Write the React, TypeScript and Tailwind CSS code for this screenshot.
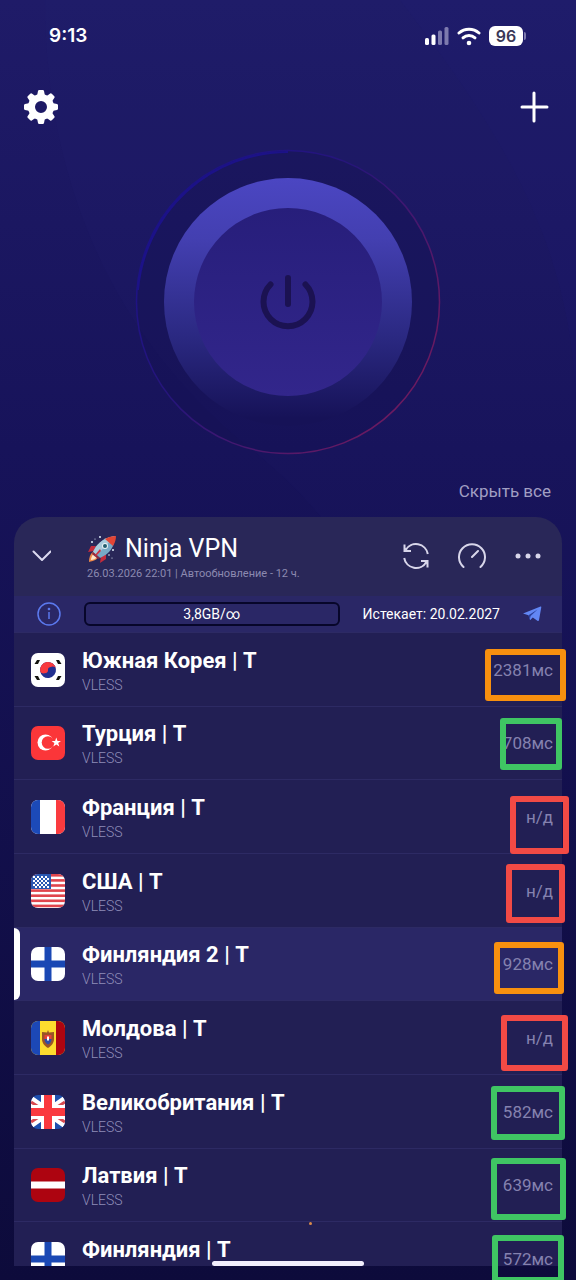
import React, { useId } from "react";

type Server = { name: string; ping: string; flag: React.ReactNode; active?: boolean };

function Flag({ children }: { children: React.ReactNode }) {
  const id = useId();
  return (
    <svg viewBox="0 0 34 34" className="size-[34px] shrink-0" aria-hidden="true">
      <defs>
        <clipPath id={id}>
          <rect width="34" height="34" rx="7" />
        </clipPath>
      </defs>
      <g clipPath={`url(#${id})`}>{children}</g>
    </svg>
  );
}

const korea = (
  <Flag>
    <rect width="34" height="34" fill="#fff" />
    <g transform="rotate(-8 17 17)">
      <circle cx="17" cy="17" r="8" fill="#23308f" />
      <path d="M9 17a8 8 0 0 1 16 0a4 2.800 0 0 0-8 0a4 2.800 0 0 1-8 0z" fill="#f83a3e" />
    </g>
    <path d="M6 7h3l-2 4H3.500zM25 7h3l2.500 4H27zM3.500 23H7l2 4H6zM27 23h3.500L28 27h-3z" fill="#14140f" />
  </Flag>
);

const turkey = (
  <Flag>
    <rect width="34" height="34" fill="#fb3639" />
    <circle cx="14.500" cy="16.500" r="8" fill="#fff" />
    <circle cx="17" cy="16.500" r="6.300" fill="#fb3639" />
    <path d="M25.300 11.600l1.200 3.400 3.500 0-2.800 2.100 1.100 3.400-3-2-3 2 1.100-3.400-2.800-2.100 3.500 0z" fill="#fff" />
  </Flag>
);

const france = (
  <Flag>
    <rect width="34" height="34" fill="#fff" />
    <rect width="9" height="34" fill="#1c4ab8" />
    <rect x="25" width="9" height="34" fill="#fa3b3f" />
  </Flag>
);

const usa = (
  <Flag>
    <rect width="34" height="34" fill="#fff" />
    {[0, 1, 2, 3, 4, 5, 6].map((i) => (
      <rect key={i} y={i * 5.1} width="34" height="2.600" fill="#e0454d" />
    ))}
    <rect width="20" height="15" fill="#2a58b2" />
    {[0, 1, 2, 3, 4, 5].map((r) =>
      [0, 1, 2, 3].map((c) => (
        <rect key={`${r}-${c}`} x={2 + c * 4 + (r % 2) * 2} y={2 + r * 2} width="2" height="2" fill="#fff" />
      ))
    )}
  </Flag>
);

const finland = (
  <Flag>
    <rect width="34" height="34" fill="#fff" />
    <path d="M13.500 0h7v13.500H34v7H20.500V34h-7V20.500H0v-7h13.500z" fill="#1a48b4" />
  </Flag>
);

const moldova = (
  <Flag>
    <rect width="34" height="34" fill="#fddc2e" />
    <rect width="9" height="34" fill="#1c48b6" />
    <rect x="25" width="9" height="34" fill="#ae0510" />
    <path d="M17 9l1 2.500 5-.500v7c0 4-2.500 7-6 9-3.500-2-6-5-6-9v-7l5 .500z" fill="#9b5426" />
    <path d="M13.500 14h7v4h-7z" fill="#e8403a" />
    <path d="M13.500 18h7c0 3-1.500 4.500-3.500 5.500-2-1-3.500-2.500-3.500-5.500z" fill="#2d4da8" />
    <path d="M16 15.500h2v4h-2z" fill="#fff" />
  </Flag>
);

const britain = (
  <Flag>
    <rect width="34" height="34" fill="#1d4fae" />
    <path d="M0 5l34 24M34 5L0 29" stroke="#fff" strokeWidth="8" />
    <path d="M0 7l14 9M34 7L20 16M0 27l14-9M34 27L20 18" stroke="#d84a50" strokeWidth="3" />
    <path d="M10 0h14v10h10v14H24v10H10V24H0V10h10z" fill="#fff" />
    <path d="M13 0h8v13h13v8H21v13h-8V21H0v-8h13z" fill="#fa393f" />
  </Flag>
);

const latvia = (
  <Flag>
    <rect width="34" height="34" fill="#ad0410" />
    <rect y="13.500" width="34" height="7" fill="#fff" />
  </Flag>
);

const servers: Server[] = [
  { name: "Южная Корея | T", ping: "2381мс", flag: korea },
  { name: "Турция | T", ping: "708мс", flag: turkey },
  { name: "Франция | T", ping: "н/д", flag: france },
  { name: "США | T", ping: "н/д", flag: usa },
  { name: "Финляндия 2 | T", ping: "928мс", flag: finland, active: true },
  { name: "Молдова | T", ping: "н/д", flag: moldova },
  { name: "Великобритания | T", ping: "582мс", flag: britain },
  { name: "Латвия | T", ping: "639мс", flag: latvia },
  { name: "Финляндия | T", ping: "572мс", flag: finland },
];

// Hand-placed highlight frames drawn over the ping column.
const marks = [
  "top-[17px] -right-[4px] w-[81px] h-[52px] border-[#f8900f]",
  "top-[86px] right-0 w-[62px] h-[52px] border-[#3fc563]",
  "top-[164px] -right-[7px] w-[59px] h-[58px] border-[#f24a45]",
  "top-[232px] -right-[3px] w-[59px] h-[59px] border-[#f24a45]",
  "top-[310px] -right-[2px] w-[70px] h-[52px] border-[#f8900f]",
  "top-[383px] -right-[6px] w-[67px] h-[56px] border-[#f24a45]",
  "top-[454px] -right-[3px] w-[74px] h-[54px] border-[#3fc563]",
  "top-[526px] -right-[4px] w-[75px] h-[62px] border-[#3fc563]",
  "top-[603px] -right-[2px] w-[72px] h-[48px] border-[#3fc563]",
];

function Rocket() {
  return (
    <svg viewBox="0 0 30 30" className="size-[30px]" role="img" aria-label="Ракета">
      <path d="M9 12l-5 0-3 6 6-1zM19 20l0 5-6 4 1-7z" fill="#c42b3c" />
      <path d="M6 18c-3 2-4 6-4 10 4-1 8-2 9-5z" fill="#f08a4b" />
      <path d="M7 20c-2 1-3 4-3 6 2 0 5-1 6-3z" fill="#fde7c8" />
      <path d="M6 18C9 11 15 4 28 2c0 11-6 18-15 22z" fill="#78a9c6" />
      <path d="M6 18C9 11 15 4 28 2L10 21z" fill="#a9cbdc" />
      <path d="M18 5c3-2 7-3 11-3 0 3-1 7-3 10z" fill="#e24535" />
      <path d="M6 18l7 6-2 1-6-5z" fill="#8e2b40" />
      <circle cx="18" cy="12" r="3" fill="#e8f3f5" />
      <circle cx="18" cy="12" r="2" fill="#245e6e" />
      <path d="M13 15l-5 6 1 1 5-5z" fill="#cc3340" />
      <g fill="#dff0fa">
        <circle cx="5" cy="8" r="1" /><circle cx="13" cy="3" r="1" /><circle cx="8" cy="5" r=".6" />
        <circle cx="26" cy="16" r="1" /><circle cx="22" cy="21" r=".8" /><circle cx="25" cy="24" r=".6" />
      </g>
    </svg>
  );
}

function StatusBar() {
  return (
    <div className="flex h-[70px] items-center justify-between pt-0.5 pr-[50px] pl-[49px]">
      <span className="font-['Inter'] text-[19px] leading-6 font-semibold">9:13</span>
      <div className="flex items-center gap-2">
        <svg viewBox="0 0 24 18" className="h-[18px] w-6" aria-label="Сигнал" role="img">
          <rect x="0" y="11" width="4" height="7" rx="1.500" fill="#fff" />
          <rect x="6.500" y="7.500" width="4" height="10.500" rx="1.500" fill="#fff" />
          <rect x="13" y="3.500" width="4" height="14.500" rx="1.500" fill="#7d7aae" />
          <rect x="19.500" y="0" width="4" height="18" rx="1.500" fill="#7d7aae" />
        </svg>
        <svg viewBox="0 0 24 20" className="h-5 w-6" fill="none" stroke="#fff" strokeWidth="3" strokeLinecap="round" aria-label="Wi-Fi" role="img">
          <path d="M2 7a15 15 0 0 1 20 0" />
          <path d="M6 11.800a9 9 0 0 1 12 0" />
          <circle cx="12" cy="17" r="2.300" fill="#fff" stroke="none" />
        </svg>
        <div className="flex items-center gap-px">
          <span className="flex h-5 w-[34px] items-center justify-center rounded-md bg-white font-['Inter'] text-base leading-none font-semibold text-[#3a3856]">96</span>
          <span className="h-2 w-[2px] rounded-r bg-[#7d7aae]" />
        </div>
      </div>
    </div>
  );
}

export default function App() {
  return (
    <div className="relative flex h-screen flex-col overflow-hidden bg-linear-to-b from-[#1f1b68] via-[#17135a] via-35% to-[#0d0b3b] font-['Roboto',sans-serif] text-white">
      <svg viewBox="0 0 576 1280" preserveAspectRatio="none" className="pointer-events-none absolute inset-0 size-full" aria-hidden="true">
        <path d="M45 0C45 190 120 340 240 440C330 510 400 600 420 760L576 760V0z" fill="#2a2a80" fillOpacity=".07" />
        <path d="M400 0C500 130 570 240 576 400V0z" fill="#3030a0" fillOpacity=".05" />
      </svg>

      <div className="relative flex min-h-0 flex-1 flex-col">
        <StatusBar />

        <header className="flex h-[74px] items-center justify-between px-6">
          <button aria-label="Настройки" className="size-[34px]">
            <svg viewBox="0 0 34 34" className="size-[34px]" fill="none">
              <circle cx="17" cy="17" r="9.500" stroke="#fff" strokeWidth="7" />
              {[0, 45, 90, 135, 180, 225, 270, 315].map((a) => (
                <path key={a} d="M13 6l1-5q.2-1 1.200-1h3.600q1 0 1.200 1l1 5z" fill="#fff" transform={`rotate(${a} 17 17)`} />
              ))}
            </svg>
          </button>
          <button aria-label="Добавить" className="size-8">
            <svg viewBox="0 0 32 32" className="size-8" stroke="#fff" strokeWidth="3" strokeLinecap="round">
              <path d="M14 2v28M2 16h25" />
            </svg>
          </button>
        </header>

        <div className="flex justify-center pt-1">
          <button aria-label="Подключить" className="size-[308px]">
            <svg viewBox="0 0 308 308" className="size-full" fill="none">
              <defs>
                <linearGradient id="ring" x1="0" y1="0" x2="0" y2="1">
                  <stop offset="0" stopColor="#4b46c2" />
                  <stop offset=".25" stopColor="#433fb0" />
                  <stop offset=".65" stopColor="#2a2880" />
                  <stop offset=".97" stopColor="#161257" />
                </linearGradient>
                <linearGradient id="core" x1="0" y1="0" x2="0" y2="1">
                  <stop offset="0" stopColor="#271e7b" />
                  <stop offset="1" stopColor="#32268b" />
                </linearGradient>
                <linearGradient id="halo" x1="0.1" y1="0.2" x2="0.9" y2="0.8">
                  <stop offset="0" stopColor="#1c1288" />
                  <stop offset=".4" stopColor="#27157a" />
                  <stop offset="1" stopColor="#6c1a60" />
                </linearGradient>
              </defs>
              <circle cx="154" cy="154" r="151.500" fill="#14114f" fillOpacity=".3" stroke="url(#halo)" strokeWidth="1.500" />
              <path d="M4 142A150 150 0 0 1 154 4A151 151 0 0 0 4 142z" fill="#1c1288" stroke="#1c1288" strokeWidth="2" />
              <circle cx="154" cy="154" r="124" fill="url(#ring)" />
              <circle cx="154" cy="154" r="94" fill="url(#core)" />
              <path d="M136.500 136.500a24.500 24.500 0 1 0 35 0M154 130v26" stroke="#1b1252" strokeWidth="6" strokeLinecap="round" />
            </svg>
          </button>
        </div>

        <div className="flex h-[61px] items-center justify-end pr-[25px] pt-[9px]">
          <button className="text-[17px] leading-5 text-[#a19fc3]">Скрыть все</button>
        </div>

        <section className="relative mx-[14px] mb-[14px] flex min-h-0 flex-1 flex-col">
          <div className="flex h-[79px] shrink-0 items-center rounded-t-[26px] bg-[#292758] pr-[20px] pl-[17px]">
            <button aria-label="Свернуть" className="size-5">
              <svg viewBox="0 0 20 20" className="size-5" fill="none" stroke="#dcdaf0" strokeWidth="2" strokeLinecap="round" strokeLinejoin="round">
                <path d="M2.500 4.500l8.500 8.500 8.500-8.500" />
              </svg>
            </button>
            <div className="ml-9 flex-1 pt-0.5">
              <h1 className="flex items-center gap-2 text-[25px] leading-8">
                <Rocket />
                Ninja VPN
              </h1>
              <p className="text-[11px] leading-[18px] text-[#8c8ab0]">26.03.2026 22:01 | Автообновление - 12 ч.</p>
            </div>
            <div className="flex items-center gap-7 pb-0.5">
              <button aria-label="Обновить" className="size-7">
                <svg viewBox="0 0 28 28" className="size-7" fill="none" stroke="#d8d6ea" strokeWidth="2">
                  <path d="M3.600 8A12 12 0 0 1 25.800 12M24.400 20A12 12 0 0 1 2.200 16" />
                  <path d="M2.500 2.500v6.500h6.500M25.500 25.500v-6.500h-6.500" />
                  <path d="M2.500 5v4h4zM25.500 23v-4h-4z" fill="#d8d6ea" stroke="none" />
                </svg>
              </button>
              <button aria-label="Проверить скорость" className="size-7">
                <svg viewBox="0 0 28 28" className="size-7" fill="none" stroke="#d8d6ea" strokeWidth="2" strokeLinecap="round">
                  <path d="M5.500 25a13 13 0 1 1 17 0M14 15l6-6" />
                </svg>
              </button>
              <button aria-label="Ещё" className="size-7">
                <svg viewBox="0 0 28 28" className="size-7" fill="#d8d6ea">
                  <circle cx="4" cy="14" r="2.500" /><circle cx="14" cy="14" r="2.500" /><circle cx="24" cy="14" r="2.500" />
                </svg>
              </button>
            </div>
          </div>

          <div className="flex h-9 shrink-0 items-center bg-[#2a2766] pr-5 pl-[23px]">
            <button aria-label="Информация" className="size-6">
              <svg viewBox="0 0 24 24" className="size-6" fill="none" stroke="#5b79ee" strokeWidth="1.500">
                <circle cx="12" cy="12" r="11" />
                <path d="M12 10v7" />
                <circle cx="12" cy="7" r=".6" fill="#5b79ee" />
              </svg>
            </button>
            <div className="ml-[23px] flex h-6 flex-1 items-center justify-center rounded-md border-2 border-[#07062a] text-sm leading-4">3,8GB/∞</div>
            <span className="ml-[23px] text-sm leading-4">Истекает: 20.02.2027</span>
            <a href="#telegram" aria-label="Telegram" className="ml-[22px]">
              <svg viewBox="0 0 20 16" className="h-4 w-5">
                <path d="M1 7.500L18.500 .5q1-.3.800.7L17 14q-.3 1.500-1.600.8L10.800 11.500 8.500 13.700q-.6.500-.7-.4L6.500 9.200z" fill="#6287f5" />
                <path d="M6.500 9.200L15.500 3.500 8.600 10 7.800 13.500z" fill="#2a3f9c" />
              </svg>
            </a>
          </div>

          <div className="relative flex min-h-0 flex-1 flex-col">
            <ul className="grid min-h-0 flex-1 auto-rows-[74px_73px_74px] overflow-hidden bg-[#221f54]">
              {servers.map((s) => (
                <li key={s.name} className={s.active ? "relative border-t border-[#2d2a64] bg-[#2a2766]" : "border-t border-[#2d2a64]"}>
                  {s.active && <span className="absolute inset-y-0 left-0 w-[6px] rounded-r-md bg-white" />}
                  <button className="flex size-full items-center pr-[9px] pl-[17px] text-left">
                    {s.flag}
                    <span className="ml-[17px] flex flex-1 flex-col pt-[2px]">
                      <span className="text-[22px] leading-7 font-bold">{s.name}</span>
                      <span className="text-sm leading-5 font-light text-[#8f8db8]">VLESS</span>
                    </span>
                    <span className="text-[17px] leading-5 text-[#8582af]">{s.ping}</span>
                  </button>
                </li>
              ))}
            </ul>
            <div className="pointer-events-none absolute inset-0" aria-hidden="true">
              {marks.map((m) => (
                <span key={m} className={`absolute rounded-[3px] border-[6px] ${m}`} />
              ))}
              <span className="absolute top-[590px] left-[295px] size-[3px] rounded-full bg-[#d98a4a]" />
            </div>
          </div>
        </section>
      </div>

      <div className="absolute bottom-[14px] left-1/2 h-[5px] w-[152px] -translate-x-1/2 rounded-full bg-[#f1eefc]" />
    </div>
  );
}
